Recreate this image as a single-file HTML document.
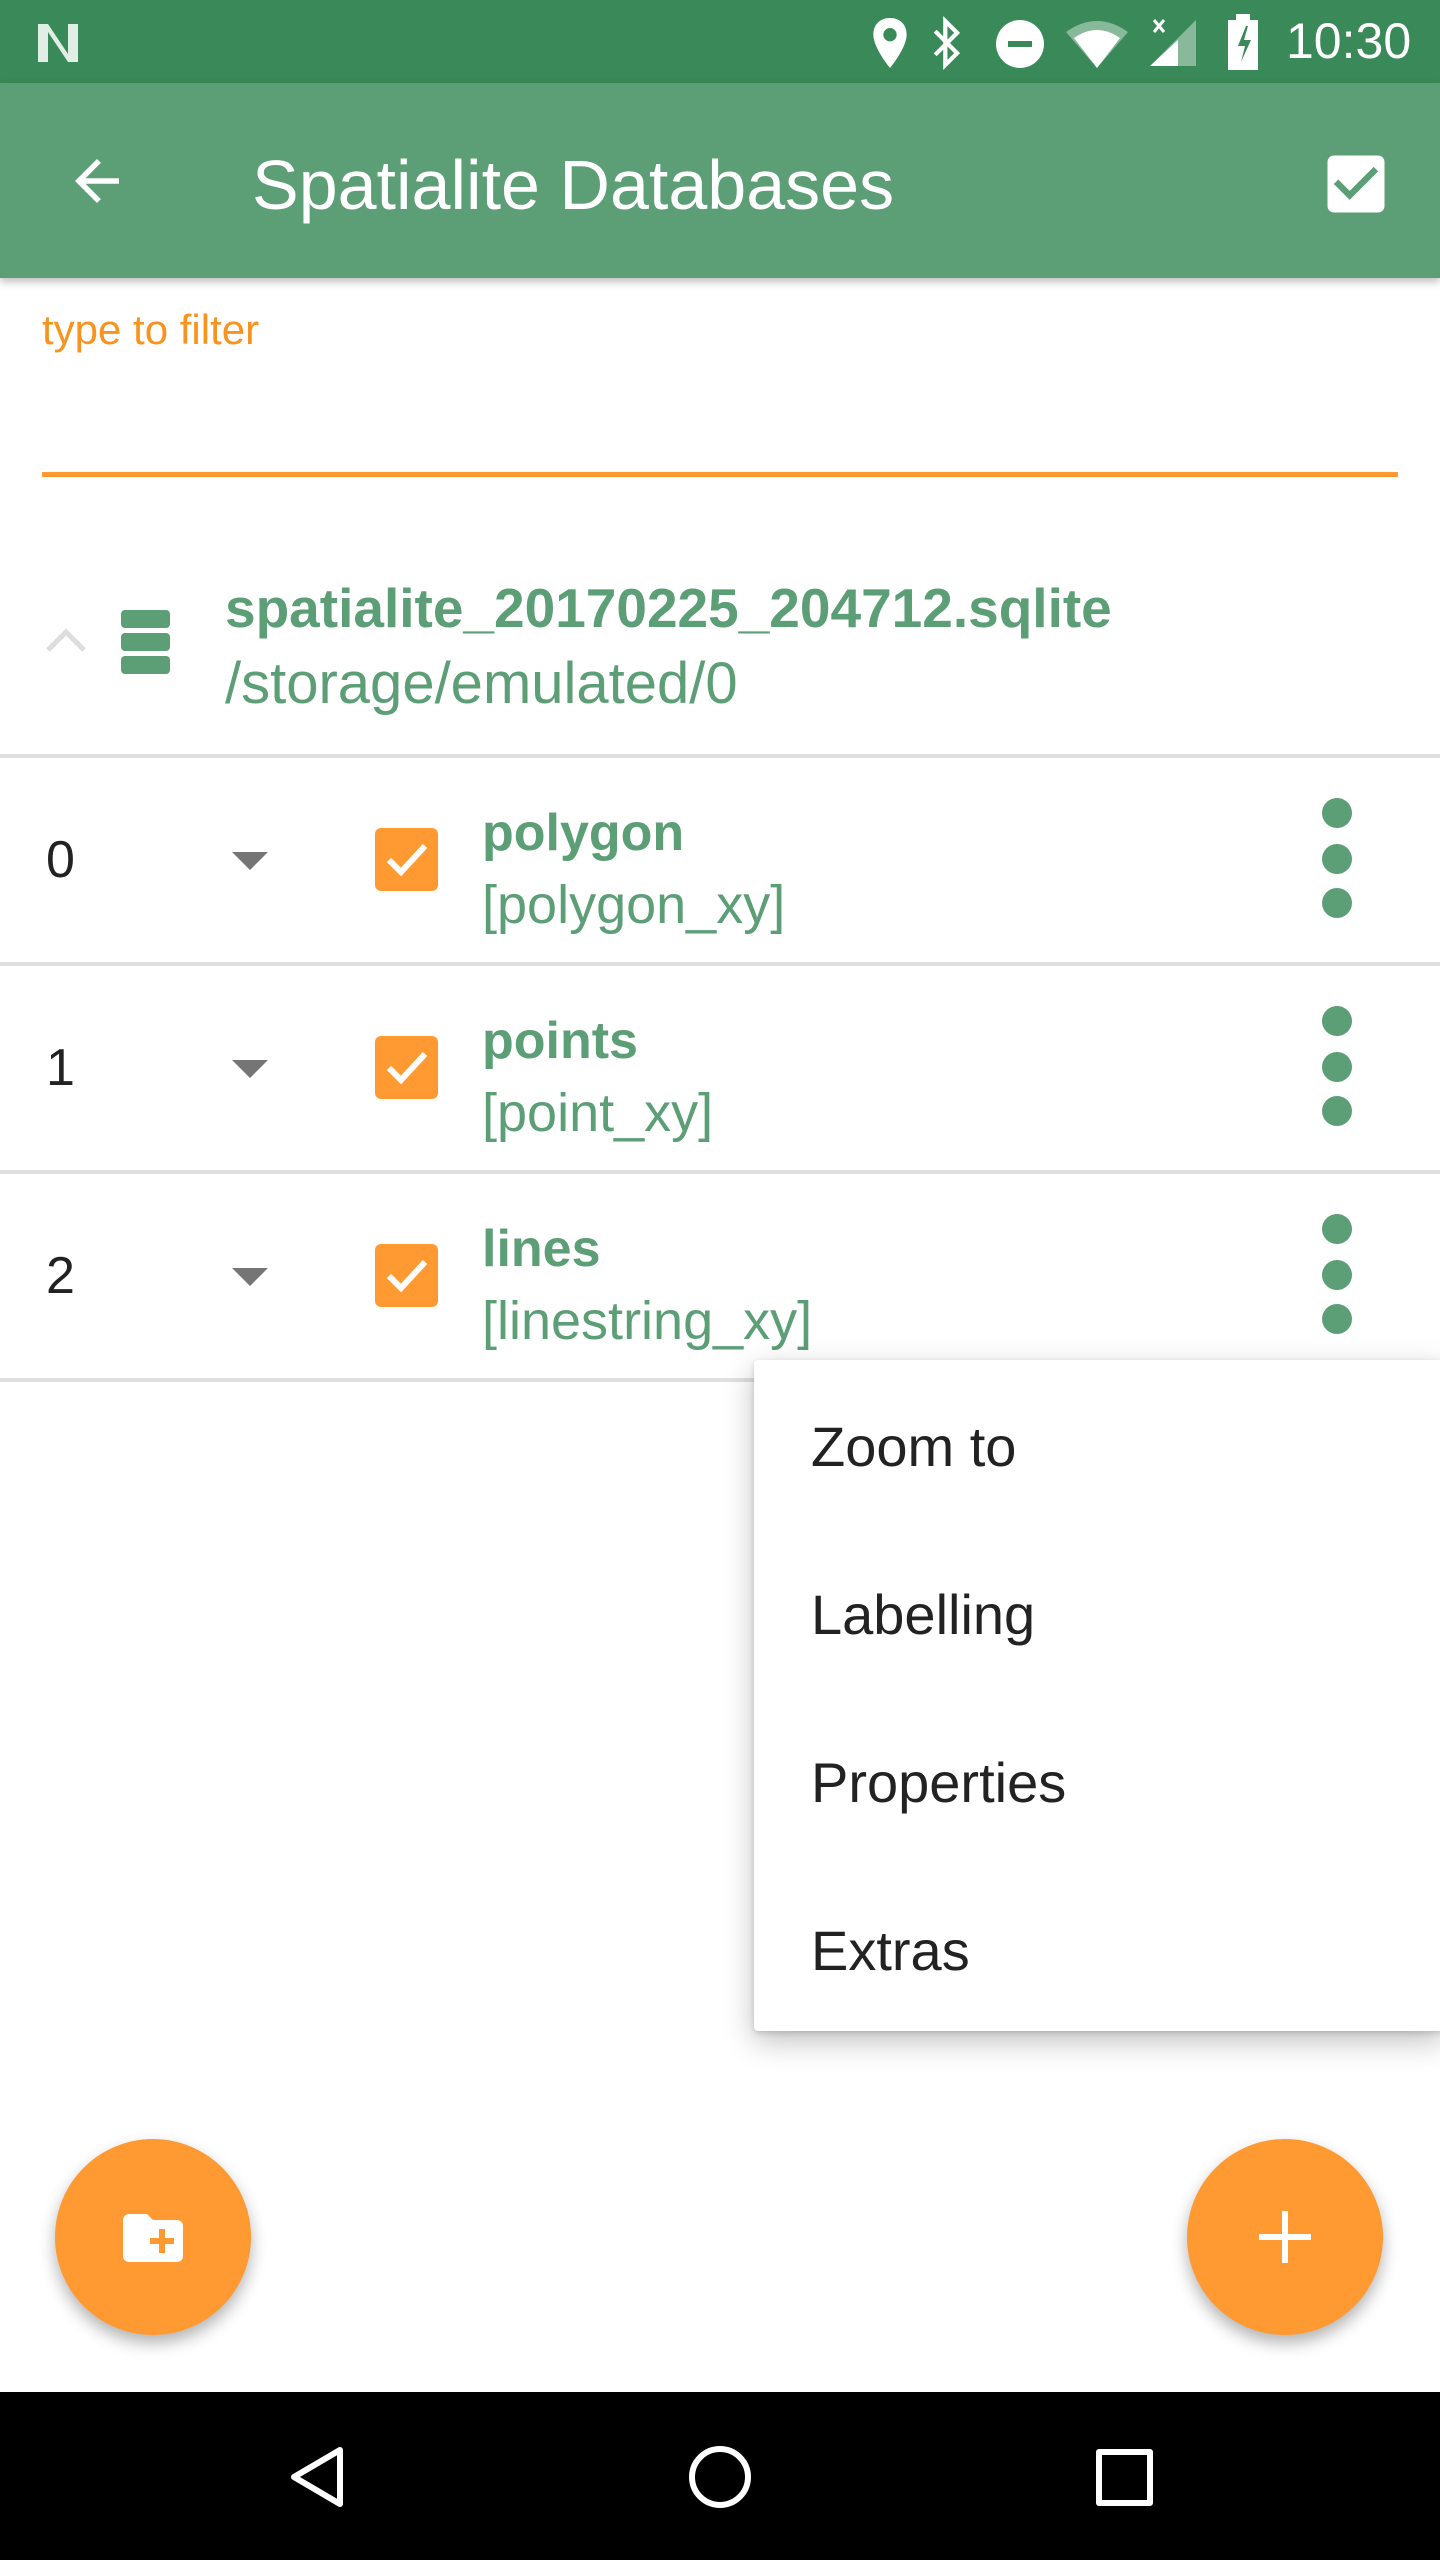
<!DOCTYPE html>
<html><head><meta charset="utf-8"><style>
*{margin:0;padding:0;box-sizing:border-box}
body{width:1440px;height:2560px;position:relative;background:#fff;font-family:"Liberation Sans",Roboto,sans-serif;overflow:hidden}
.a{position:absolute}
.g{color:#5c9e76}
.row .num{position:absolute;left:46px;font-size:52px;color:#222}
.row .name{position:absolute;left:482px;font-size:52px;font-weight:bold;color:#5c9e76}
.row .sub{position:absolute;left:482px;font-size:54px;color:#5c9e76}
.div{position:absolute;left:0;width:1440px;height:4px;background:#e0e0e0}
.dot{position:absolute;width:30px;height:30px;border-radius:50%;background:#5c9e76;left:1322px}
.cb{position:absolute;left:375px;width:63px;height:63px;border-radius:6px;background:#ff9a33}
.tri{position:absolute;left:232px;width:0;height:0;border-left:18px solid transparent;border-right:18px solid transparent;border-top:18px solid #757575}
.mi{position:absolute;left:811px;font-size:56px;color:#222}
</style></head><body>
<div class="a" style="left:0;top:0;width:1440px;height:83px;background:#398a58"></div>
<div class="a" style="left:0;top:83px;width:1440px;height:195px;background:#5c9e76;box-shadow:0 4px 8px rgba(0,0,0,.25)"></div>
<svg class="a" style="left:36px;top:20px" width="52" height="46" viewBox="0 0 52 46"><path d="M2 4h10l20 30V4h10v38H32L12 12v30H2z" fill="#fff" opacity=".85"/></svg>
<svg class="a" style="left:870px;top:16px" width="40" height="54" viewBox="0 0 24 32"><path d="M12 1C6 1 2 5 2 11c0 8 10 20 10 20s10-12 10-20C22 5 18 1 12 1zm0 14a4 4 0 110-8 4 4 0 010 8z" fill="#fff"/></svg>
<svg class="a" style="left:930px;top:16px" width="34" height="54" viewBox="0 0 20 32"><path d="M3 9l13 13-7 7V3l7 7L3 23" stroke="#fff" stroke-width="2.5" fill="none"/></svg>
<div class="a" style="left:996px;top:20px;width:48px;height:48px;border-radius:50%;background:#fff"></div>
<div class="a" style="left:1008px;top:41px;width:24px;height:6px;background:#398a58"></div>
<svg class="a" style="left:1066px;top:20px" width="62" height="48" viewBox="0 0 62 48"><path d="M0 12Q31-10 62 12L31 48z" fill="#fff" opacity=".4"/><path d="M8 18Q31 2 54 18L31 48z" fill="#fff"/></svg>
<svg class="a" style="left:1148px;top:16px" width="50" height="52" viewBox="0 0 50 52"><path d="M48 4v46H2z" fill="#fff" opacity=".4"/><path d="M30 24v26H2z" fill="#fff"/><path d="M6 4l10 12M16 4L6 16" stroke="#fff" stroke-width="3"/></svg>
<svg class="a" style="left:1226px;top:14px" width="34" height="56" viewBox="0 0 34 56"><path d="M10 0h14v6h8v50H2V6h8z" fill="#fff"/><path d="M20 12l-8 20h7l-4 16 10-22h-7l4-14z" fill="#398a58"/></svg>
<div class="a" style="left:1286px;top:12px;font-size:50px;color:#fff">10:30</div>
<svg class="a" style="left:64px;top:148px" width="66" height="66" viewBox="0 0 24 24"><path d="M20 11H7.83l5.59-5.59L12 4l-8 8 8 8 1.41-1.41L7.83 13H20v-2z" fill="#fff"/></svg>
<div class="a" style="left:252px;top:145px;font-size:70px;color:#fff">Spatialite Databases</div>
<svg class="a" style="left:1318px;top:146px" width="76" height="76" viewBox="0 0 24 24"><path d="M19 3H5a2 2 0 00-2 2v14a2 2 0 002 2h14a2 2 0 002-2V5a2 2 0 00-2-2zm-9 14l-5-5 1.41-1.41L10 14.17l7.59-7.59L19 8l-9 9z" fill="#fff"/></svg>
<div class="a" style="left:42px;top:306px;font-size:42px;color:#f7931e">type to filter</div>
<div class="a" style="left:42px;top:472px;width:1356px;height:5px;background:#ff9a33"></div>
<svg class="a" style="left:44px;top:626px" width="44" height="28" viewBox="0 0 44 28"><path d="M4 24L22 6l18 18" stroke="#ddd" stroke-width="5" fill="none"/></svg>
<div class="a" style="left:121px;top:610px;width:49px;height:18px;border-radius:4px;background:#5c9e76"></div>
<div class="a" style="left:121px;top:633px;width:49px;height:18px;border-radius:4px;background:#5c9e76"></div>
<div class="a" style="left:121px;top:656px;width:49px;height:18px;border-radius:4px;background:#5c9e76"></div>
<div class="a g" style="left:225px;top:576px;font-size:55px;font-weight:bold">spatialite_20170225_204712.sqlite</div>
<div class="a g" style="left:225px;top:650px;font-size:58px">/storage/emulated/0</div>
<div class="div" style="top:754px"></div>
<div class="row a" style="left:0;top:758px;width:1440px;height:205px">
<div class="num" style="top:72px">0</div><div class="tri" style="top:94px"></div>
<div class="cb" style="top:70px"></div>
<svg class="a" style="left:383px;top:80px" width="48" height="44" viewBox="0 0 24 22"><path d="M3 11l6 6L21 4" stroke="#fff" stroke-width="3" fill="none"/></svg>
<div class="name" style="top:45px">polygon</div><div class="sub" style="top:116px">[polygon_xy]</div>
<div class="dot" style="top:40px"></div><div class="dot" style="top:86px"></div><div class="dot" style="top:130px"></div>
</div>
<div class="div" style="top:962px"></div>
<div class="row a" style="left:0;top:966px;width:1440px;height:205px">
<div class="num" style="top:72px">1</div><div class="tri" style="top:94px"></div>
<div class="cb" style="top:70px"></div>
<svg class="a" style="left:383px;top:80px" width="48" height="44" viewBox="0 0 24 22"><path d="M3 11l6 6L21 4" stroke="#fff" stroke-width="3" fill="none"/></svg>
<div class="name" style="top:45px">points</div><div class="sub" style="top:116px">[point_xy]</div>
<div class="dot" style="top:40px"></div><div class="dot" style="top:86px"></div><div class="dot" style="top:130px"></div>
</div>
<div class="div" style="top:1170px"></div>
<div class="row a" style="left:0;top:1174px;width:1440px;height:205px">
<div class="num" style="top:72px">2</div><div class="tri" style="top:94px"></div>
<div class="cb" style="top:70px"></div>
<svg class="a" style="left:383px;top:80px" width="48" height="44" viewBox="0 0 24 22"><path d="M3 11l6 6L21 4" stroke="#fff" stroke-width="3" fill="none"/></svg>
<div class="name" style="top:45px">lines</div><div class="sub" style="top:116px">[linestring_xy]</div>
<div class="dot" style="top:40px"></div><div class="dot" style="top:86px"></div><div class="dot" style="top:130px"></div>
</div>
<div class="div" style="top:1378px"></div>
<div class="a" style="left:754px;top:1360px;width:690px;height:671px;background:#fff;border-radius:4px;box-shadow:0 10px 30px rgba(0,0,0,.25),0 2px 6px rgba(0,0,0,.15)">
<div class="mi" style="left:57px;top:54px">Zoom to</div>
<div class="mi" style="left:57px;top:222px">Labelling</div>
<div class="mi" style="left:57px;top:390px">Properties</div>
<div class="mi" style="left:57px;top:558px">Extras</div>
</div>
<div class="a" style="left:55px;top:2139px;width:196px;height:196px;border-radius:50%;background:#ff9a33;box-shadow:0 8px 16px rgba(0,0,0,.3)"></div>
<svg class="a" style="left:117px;top:2202px" width="72" height="72" viewBox="0 0 24 24"><path d="M20 6h-8l-2-2H4a2 2 0 00-2 2v12a2 2 0 002 2h16a2 2 0 002-2V8a2 2 0 00-2-2zm-1 8h-3v3h-2v-3h-3v-2h3V9h2v3h3v2z" fill="#fff"/></svg>
<div class="a" style="left:1187px;top:2139px;width:196px;height:196px;border-radius:50%;background:#ff9a33;box-shadow:0 8px 16px rgba(0,0,0,.3)"></div>
<div class="a" style="left:1259px;top:2234px;width:52px;height:6px;background:#fff"></div>
<div class="a" style="left:1282px;top:2211px;width:6px;height:52px;background:#fff"></div>
<div class="a" style="left:0;top:2392px;width:1440px;height:168px;background:#000"></div>
<svg class="a" style="left:284px;top:2444px" width="66" height="66" viewBox="0 0 66 66"><path d="M56 6v54L10 33z" stroke="#fff" stroke-width="6" fill="none" stroke-linejoin="round"/></svg>
<div class="a" style="left:689px;top:2446px;width:62px;height:62px;border-radius:50%;border:6px solid #fff"></div>
<div class="a" style="left:1096px;top:2449px;width:57px;height:57px;border:6px solid #fff;border-radius:3px"></div>
</body></html>
